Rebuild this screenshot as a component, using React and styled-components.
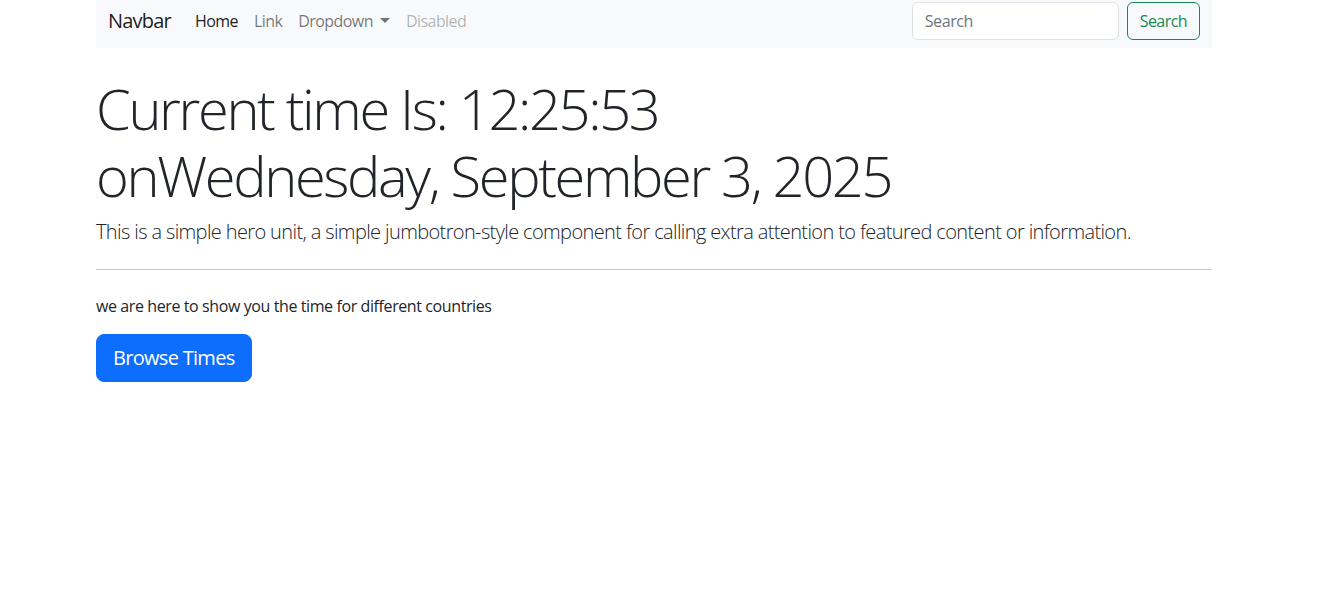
import React from "react";
import styled, { createGlobalStyle } from "styled-components";

const GlobalStyle = createGlobalStyle`
  body {
    margin: 0;
    font-family: "Open Sans", "Liberation Sans", sans-serif;
    font-size: 16px;
    line-height: 1.5;
    letter-spacing: -0.025em;
    color: #212529;
    background: #fff;
  }
`;

const Page = styled.div`
  width: 1116px;
  margin-left: 96px;
`;

const Navbar = styled.nav`
  height: 48px;
  box-sizing: border-box;
  background: #f8f9fa;
  padding: 2px 12px 8px;
  display: flex;
  align-items: center;
`;

const Brand = styled.a`
  font-size: 20px;
  letter-spacing: -0.04em;
  color: rgba(0, 0, 0, 0.9);
  margin-right: 16px;
  text-decoration: none;
`;

const NavList = styled.div`
  display: flex;
  flex: 1;
`;

const NavLink = styled.a`
  padding: 8px;
  letter-spacing: -0.035em;
  text-decoration: none;
  color: ${(p) =>
    p.$active ? "rgba(0,0,0,.9)" : p.$disabled ? "rgba(0,0,0,.3)" : "rgba(0,0,0,.55)"};

  ${(p) =>
    p.$toggle &&
    `
    &::after {
      content: "";
      display: inline-block;
      margin-left: 7px;
      vertical-align: 4px;
      border-top: 5px solid;
      border-right: 5px solid transparent;
      border-left: 5px solid transparent;
    }
  `}
`;

const SearchForm = styled.form`
  display: flex;
  gap: 8px;
`;

const SearchInput = styled.input`
  width: 207px;
  height: 38px;
  box-sizing: border-box;
  padding: 6px 12px;
  font: inherit;
  letter-spacing: inherit;
  color: #212529;
  border: 1px solid #dee2e6;
  border-radius: 6px;
  background: #fff;

  &::placeholder {
    color: #6c757d;
  }
`;

const OutlineButton = styled.button`
  height: 38px;
  padding: 6px 12px;
  font: inherit;
  letter-spacing: -0.035em;
  color: #198754;
  background: transparent;
  border: 1px solid #198754;
  border-radius: 6px;
`;

const Hero = styled.main`
  padding-top: 27px;
`;

const Display = styled.h1`
  margin: 0 0 8px;
  font-size: 56px;
  font-weight: 300;
  line-height: 1.2;
  letter-spacing: -0.042em;
`;

const Lead = styled.p`
  margin: 0;
  font-size: 20px;
  font-weight: 300;
  letter-spacing: -0.031em;
`;

const Rule = styled.hr`
  margin: 22px 0 24px;
  border: 0;
  border-top: 1px solid #c8c9ca;
`;

const Text = styled.p`
  margin: 0 0 16px;
`;

const PrimaryButton = styled.button`
  padding: 8px 16px;
  font: inherit;
  font-size: 20px;
  line-height: 1.5;
  letter-spacing: -0.035em;
  color: #fff;
  background: #0d6efd;
  border: 1px solid #0d6efd;
  border-radius: 8px;
`;

export default function App() {
  return (
    <Page>
      <GlobalStyle />
      <Navbar>
        <Brand href="#">Navbar</Brand>
        <NavList>
          <NavLink href="#" $active>
            Home
          </NavLink>
          <NavLink href="#">Link</NavLink>
          <NavLink href="#" $toggle>
            Dropdown
          </NavLink>
          <NavLink $disabled>Disabled</NavLink>
        </NavList>
        <SearchForm onSubmit={(e) => e.preventDefault()}>
          <SearchInput type="search" placeholder="Search" />
          <OutlineButton type="submit">Search</OutlineButton>
        </SearchForm>
      </Navbar>
      <Hero>
        <Display>
          Current time Is: 12:25:53
          <br />
          onWednesday, September 3, 2025
        </Display>
        <Lead>
          This is a simple hero unit, a simple jumbotron-style component for
          calling extra attention to featured content or information.
        </Lead>
        <Rule />
        <Text>we are here to show you the time for different countries</Text>
        <PrimaryButton>Browse Times</PrimaryButton>
      </Hero>
    </Page>
  );
}
